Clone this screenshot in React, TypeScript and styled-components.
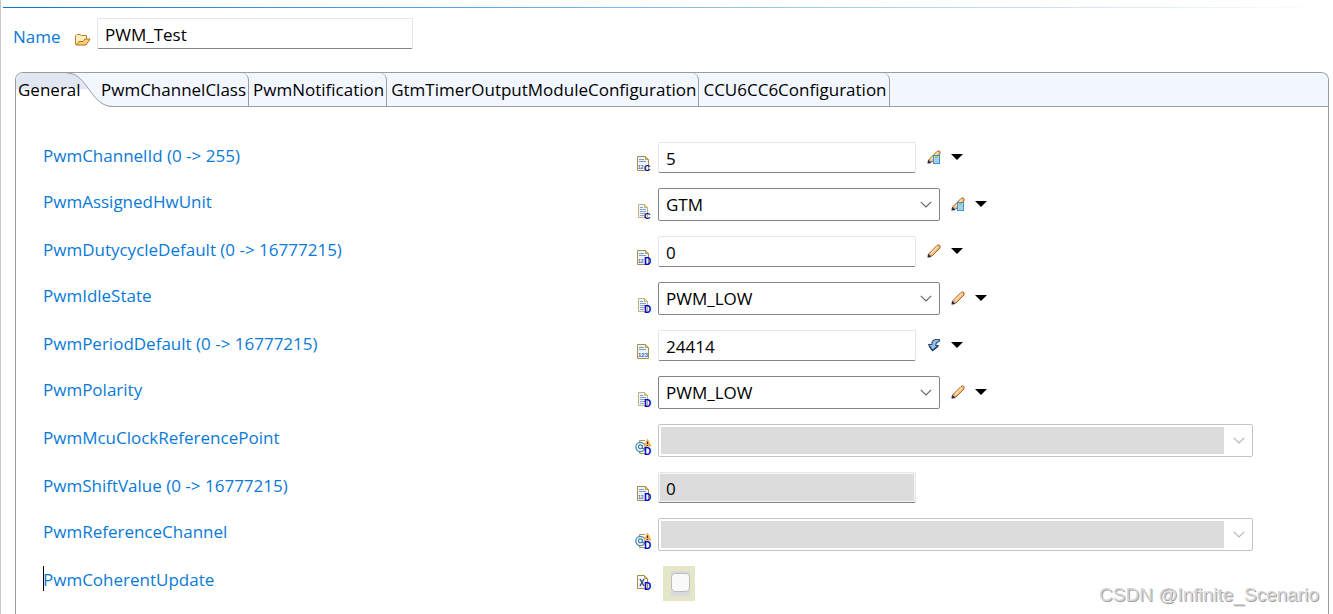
import React from "react";
import styled, { createGlobalStyle, css } from "styled-components";

const GlobalStyle = createGlobalStyle`
  *, *::before, *::after { box-sizing: border-box; }
  body {
    margin: 0;
    background: #ffffff;
    color: #000000;
    font-family: "Open Sans", "Noto Sans", sans-serif;
    font-size: 17px;
  }
  button, input, select { font: inherit; color: inherit; margin: 0; }
`;

const Page = styled.main`
  position: relative;
  display: flex;
  flex-direction: column;
  min-height: 100vh;
  padding: 7px 4px 0 2px;
  border-left: 1px solid #c8c8c8;
`;

const Rule = styled.div`
  height: 1px;
  background: linear-gradient(to right, #0a78d2, #ffffff);
`;

const NameBar = styled.div`
  display: flex;
  align-items: flex-start;
  padding: 10px 0 0 10px;
`;

const NameLabel = styled.label`
  width: 62px;
  line-height: 38px;
  color: #0a7ad6;
`;

const FolderSlot = styled.span`
  display: flex;
  width: 22px;
  padding-top: 16px;
`;

const boxBase = css`
  display: block;
  height: 31px;
  padding: 2px 7px 0;
  border: 1px solid #e6e6e6;
  border-bottom-color: #858585;
  border-radius: 2px;
  background: #ffffff;
  outline: none;
`;

const TextBox = styled.input<{ $wide?: boolean }>`
  ${boxBase}
  width: ${(p) => (p.$wide ? "316px" : "258px")};
  &:disabled {
    background: #dcdcdc;
    box-shadow: inset 0 0 0 1px #f6f6f6;
    color: #000000;
    opacity: 1;
  }
`;

const Folder = styled.section`
  display: flex;
  flex: 1;
  flex-direction: column;
  margin: 16px 0 0 12px;
  border: 1px solid #9c9c9c;
  border-bottom: 0;
  border-radius: 8px 8px 0 0;
  overflow: hidden;
`;

const TabStrip = styled.div`
  display: flex;
  height: 34px;
  border-bottom: 1px solid #9c9c9c;
  background: #f2f7ff;
`;

const Tab = styled.button`
  height: 33px;
  padding: 0 2px 0 4px;
  border: 0;
  border-right: 1px solid #9c9c9c;
  border-top-right-radius: 7px;
  background: transparent;
  line-height: 34px;
  white-space: nowrap;
`;

const ActiveTab = styled.button`
  position: relative;
  height: 34px;
  width: 81px;
  padding: 0 0 0 2px;
  border: 0;
  background: transparent;
  line-height: 34px;
  text-align: left;
`;

const ActiveShape = styled.svg`
  position: absolute;
  top: 0;
  left: 0;
`;

const TabText = styled.span`
  position: relative;
`;

const Form = styled.form`
  display: flex;
  flex-direction: column;
  gap: 15px;
  padding: 35px 75px 13px 27px;
`;

const Row = styled.div`
  display: grid;
  grid-template-columns: minmax(0, 593fr) 22px minmax(0, 595fr);
  align-items: start;
`;

const FieldLabel = styled.label<{ $caret?: boolean }>`
  position: relative;
  line-height: 28px;
  color: #0a7ad6;
  white-space: nowrap;
  ${(p) =>
    p.$caret &&
    css`
      &::before {
        content: "";
        position: absolute;
        top: 0;
        left: 0;
        width: 1px;
        height: 25px;
        background: #000000;
      }
    `}
`;

const IconSlot = styled.span<{ $middle?: boolean }>`
  display: flex;
  align-self: ${(p) => (p.$middle ? "center" : "end")};
`;

const Control = styled.div`
  display: flex;
  align-items: center;
`;

const SelectWrap = styled.div<{ $fill?: boolean }>`
  position: relative;
  width: ${(p) => (p.$fill ? "100%" : "282px")};
`;

const Select = styled.select`
  display: block;
  width: 100%;
  height: 33px;
  padding: 0 28px 0 7px;
  border: 1px solid #858585;
  border-radius: 2px;
  background: #ffffff;
  appearance: none;
  outline: none;
  &:disabled {
    padding: 2px 28px 2px 2px;
    border-color: #c4c4c4;
    background: #dcdcdc content-box;
    opacity: 1;
  }
`;

const Chevron = styled.svg`
  position: absolute;
  top: 13px;
  right: 8px;
  pointer-events: none;
`;

const IconButton = styled.button`
  display: flex;
  padding: 0;
  border: 0;
  background: transparent;
`;

const Actions = styled.div`
  display: flex;
  align-items: center;
  gap: 9px;
  padding: 0 0 2px 11px;
`;

const CheckArea = styled.span`
  display: flex;
  width: 32px;
  height: 35px;
  margin-left: 5px;
  padding: 5px 5px 5px 8px;
  background: #e5e5c8;
`;

const CheckShade = styled.span`
  display: flex;
  width: 19px;
  height: 25px;
  padding-top: 2px;
  background: #dadada;
`;

const CheckBox = styled.input`
  width: 19px;
  height: 19px;
  border: 1px solid #bdbdbd;
  border-radius: 4px;
  background: #f9f9f9;
  appearance: none;
`;

const Watermark = styled.span`
  position: absolute;
  right: 14px;
  bottom: 7px;
  font-family: "Liberation Sans", Arial, sans-serif;
  font-size: 19px;
  line-height: 24px;
  color: #d6d6d6;
  text-shadow: 1px 1px 0 #a2a2a2;
`;

type Badge = "C" | "D";

function BadgeMark({ letter }: { letter: Badge }) {
  return (
    <text
      x="8"
      y="14.500"
      fontFamily="Liberation Sans, sans-serif"
      fontWeight="bold"
      fontSize={letter === "C" ? 9 : 10}
      fill={letter === "C" ? "#00007a" : "#0000c8"}
    >
      {letter}
    </text>
  );
}

function NumberIcon({ badge }: { badge?: Badge }) {
  return (
    <svg width="16" height="17" viewBox="0 0 16 17" aria-hidden="true">
      <path d="M1.500 .5H9.500L12.500 3.500V14.500H1.500Z" fill="#eef4fd" stroke="#a98f3e" />
      <path d="M9.500 .5V3.500H12.500Z" fill="#e8d392" stroke="#b99a45" />
      <path d="M3 3.500H8M3 5.500H10" stroke="#7f9cc9" />
      <text x="2" y="13" fontFamily="Liberation Sans, sans-serif" fontWeight="bold" fontSize={badge ? 5 : 6} fill="#3c69ac">
        {badge ? "12" : "123"}
      </text>
      {badge && <BadgeMark letter={badge} />}
    </svg>
  );
}

function ListIcon({ badge }: { badge?: Badge }) {
  return (
    <svg width="16" height="17" viewBox="0 0 16 17" aria-hidden="true">
      <path d="M2.500 .5H8.500L11.500 3.500V13.500H2.500Z" fill="#eef4fd" stroke="#bfb27c" />
      <path d="M8.500 .5V3.500H11.500Z" fill="#ead9a0" stroke="#c9b370" />
      <path d="M4 3.500H7M4 5.500H10M4 7.500H10M4 9.500H9M4 11.500H8" stroke="#86a2cf" />
      {badge && <BadgeMark letter={badge} />}
    </svg>
  );
}

const WideIcon = styled.svg`
  flex: none;
  margin-left: -1px;
`;

function ReferenceIcon() {
  return (
    <WideIcon width="18" height="18" viewBox="0 0 18 18" aria-hidden="true">
      <path d="M4.500 4V1.500H10M4.500 12V14.500H10" fill="none" stroke="#b3943e" />
      <circle cx="5.500" cy="8" r="4.700" fill="#edf6fd" stroke="#3f86b8" strokeWidth="1.200" />
      <path d="M7.300 6V9.300Q8.500 10.500 9.300 8.800M7.300 8a1.900 2 0 1 1 0-.5" fill="none" stroke="#3576a8" strokeWidth="1.100" />
      <path d="M12.500 .8L15.500 7H9.500Z" fill="#f9b949" stroke="#f3b45a" strokeWidth="1.600" strokeLinejoin="round" />
      <path d="M12.500 2.500V5M12.500 6V7" stroke="#4a2c00" strokeWidth="1.200" />
      <text x="9" y="15.500" fontFamily="Liberation Sans, sans-serif" fontWeight="bold" fontSize="10" fill="#0000c8">
        D
      </text>
    </WideIcon>
  );
}

function BooleanIcon() {
  return (
    <svg width="16" height="17" viewBox="0 0 16 17" aria-hidden="true">
      <path d="M1.500 .5H8.500L11.500 3.500V13.500H1.500Z" fill="#f4f8fe" stroke="#a98f3e" />
      <path d="M8.500 .5V3.500H11.500Z" fill="#e8d392" stroke="#b99a45" />
      <path d="M4 4L8 11M8 4L4 11" stroke="#34507c" strokeWidth="1.500" />
      <BadgeMark letter="D" />
    </svg>
  );
}

function FolderIcon() {
  return (
    <svg width="16" height="12" viewBox="0 0 16 12" aria-hidden="true">
      <path d="M.5 10.500V2Q.5 1.500 1 1.500L2 .5H5L6.500 1.500H11.500V4.500" fill="#fdf0bd" stroke="#b8812a" />
      <path d="M1 11L4 7.500H8L10 5H15L11 11Z" fill="#f9cf74" stroke="#b06f18" strokeLinejoin="round" />
    </svg>
  );
}

function PencilIcon({ table }: { table?: boolean }) {
  return (
    <svg width="14" height="14" viewBox="0 0 14 14" aria-hidden="true">
      <path d="M2 9.500L10 1.500Q12 .3 13 1.500V4L5 12L1.500 12.500Z" fill="#f5bd7c" stroke="#a8622a" strokeLinejoin="round" />
      <path d="M4 9.500L11 2.500" stroke="#ffe1b4" strokeWidth="1.500" />
      <path d="M.8 13.300L1.300 10.300L4 12.800Z" fill="#1d2a5e" stroke="#1d2a5e" strokeWidth="0.600" />
      {table && (
        <>
          <rect x="6.500" y="5.500" width="6" height="8" fill="#a9d8f6" stroke="#3d8fd0" />
          <path d="M8 9.500H11M8 11.500H11" stroke="#8ec6ec" />
          <rect x="8" y="6" width="3" height="2" fill="#a8c46a" />
        </>
      )}
    </svg>
  );
}

function CalculateIcon() {
  return (
    <svg width="14" height="14" viewBox="0 0 14 14" aria-hidden="true">
      <path
        d="M12.500 1.500H8.500Q4.500 2.500 5 6.500H1.500L5.500 12.500L11.500 7.500H8.800Q8.500 4.500 12.500 3Z"
        fill="#9dbddd"
        stroke="#28527f"
        strokeWidth="1.200"
        strokeLinejoin="round"
      />
      <path d="M2 8L5.500 12.500L11 8.500" fill="none" stroke="#163c66" strokeWidth="1.200" />
    </svg>
  );
}

function CaretIcon() {
  return (
    <svg width="14" height="6" viewBox="0 0 14 6" aria-hidden="true">
      <path d="M1 0H13L7 6Z" fill="#000000" />
    </svg>
  );
}

function DropChevron({ disabled }: { disabled?: boolean }) {
  return (
    <Chevron width="12" height="7" viewBox="0 0 12 7" aria-hidden="true">
      <path d="M.8 .8L6 6L11.200 .8" fill="none" stroke={disabled ? "#b4b4b4" : "#606060"} strokeWidth="1.100" />
    </Chevron>
  );
}

type ActionKind = "table" | "pencil" | "calculate";

function RowActions({ kind, name }: { kind: ActionKind; name: string }) {
  return (
    <Actions>
      <IconButton type="button" aria-label={`Edit ${name}`}>
        {kind === "calculate" ? <CalculateIcon /> : <PencilIcon table={kind === "table"} />}
      </IconButton>
      <IconButton type="button" aria-label={`More options for ${name}`}>
        <CaretIcon />
      </IconButton>
    </Actions>
  );
}

interface Field {
  name: string;
  range?: string;
  kind: "text" | "select" | "reference" | "check";
  value?: string;
  badge?: Badge;
  action?: ActionKind;
  disabled?: boolean;
}

const fields: Field[] = [
  { name: "PwmChannelId", range: "(0 -> 255)", kind: "text", value: "5", badge: "C", action: "table" },
  { name: "PwmAssignedHwUnit", kind: "select", value: "GTM", badge: "C", action: "table" },
  { name: "PwmDutycycleDefault", range: "(0 -> 16777215)", kind: "text", value: "0", badge: "D", action: "pencil" },
  { name: "PwmIdleState", kind: "select", value: "PWM_LOW", badge: "D", action: "pencil" },
  { name: "PwmPeriodDefault", range: "(0 -> 16777215)", kind: "text", value: "24414", action: "calculate" },
  { name: "PwmPolarity", kind: "select", value: "PWM_LOW", badge: "D", action: "pencil" },
  { name: "PwmMcuClockReferencePoint", kind: "reference", disabled: true },
  { name: "PwmShiftValue", range: "(0 -> 16777215)", kind: "text", value: "0", badge: "D", disabled: true },
  { name: "PwmReferenceChannel", kind: "reference", disabled: true },
  { name: "PwmCoherentUpdate", kind: "check", badge: "D" },
];

function FieldIcon({ field }: { field: Field }) {
  if (field.kind === "text") return <NumberIcon badge={field.badge} />;
  if (field.kind === "select") return <ListIcon badge={field.badge} />;
  if (field.kind === "reference") return <ReferenceIcon />;
  return <BooleanIcon />;
}

function FieldControl({ field }: { field: Field }) {
  if (field.kind === "text") {
    return <TextBox id={field.name} defaultValue={field.value} disabled={field.disabled} />;
  }
  if (field.kind === "check") {
    return (
      <CheckArea>
        <CheckShade>
          <CheckBox id={field.name} type="checkbox" />
        </CheckShade>
      </CheckArea>
    );
  }
  return (
    <SelectWrap $fill={field.kind === "reference"}>
      <Select id={field.name} disabled={field.disabled} defaultValue={field.value}>
        <option>{field.value}</option>
      </Select>
      <DropChevron disabled={field.disabled} />
    </SelectWrap>
  );
}

const otherTabs = [
  "PwmChannelClass",
  "PwmNotification",
  "GtmTimerOutputModuleConfiguration",
  "CCU6CC6Configuration",
];

export default function App() {
  return (
    <>
      <GlobalStyle />
      <Page>
        <Rule />
        <NameBar>
          <NameLabel htmlFor="name">Name</NameLabel>
          <FolderSlot>
            <FolderIcon />
          </FolderSlot>
          <TextBox id="name" $wide defaultValue="PWM_Test" />
        </NameBar>
        <Folder>
          <TabStrip role="tablist">
            <ActiveTab role="tab" aria-selected="true">
              <ActiveShape width="98" height="34" viewBox="0 0 98 34" aria-hidden="true">
                <path d="M0 0H51C72 0 74 34 97 34H0Z" fill="#ffffff" />
                <path d="M0 0H51C61 0 67 8 73 16H0Z" fill="#e0e7f1" />
                <path d="M51 0C72 0 74 33.500 97 33.500" fill="none" stroke="#9c9c9c" />
              </ActiveShape>
              <TabText>General</TabText>
            </ActiveTab>
            {otherTabs.map((tab) => (
              <Tab key={tab} role="tab" aria-selected="false">
                <TabText>{tab}</TabText>
              </Tab>
            ))}
          </TabStrip>
          <Form>
            {fields.map((field) => (
              <Row key={field.name}>
                <FieldLabel htmlFor={field.name} $caret={field.kind === "check"}>
                  {field.range ? `${field.name} ${field.range}` : field.name}
                </FieldLabel>
                <IconSlot $middle={field.kind === "check"}>
                  <FieldIcon field={field} />
                </IconSlot>
                <Control>
                  <FieldControl field={field} />
                  {field.action && <RowActions kind={field.action} name={field.name} />}
                </Control>
              </Row>
            ))}
          </Form>
        </Folder>
        <Watermark>CSDN @Infinite_Scenario</Watermark>
      </Page>
    </>
  );
}
